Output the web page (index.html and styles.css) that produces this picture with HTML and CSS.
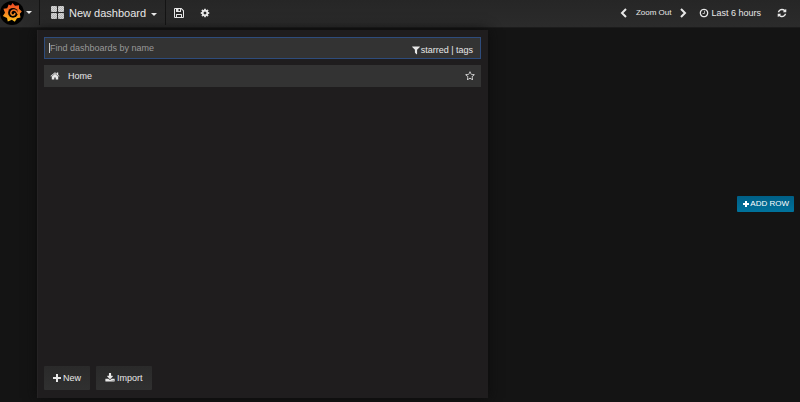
FILE: index.html
```html
<!DOCTYPE html>
<html lang="en">
<head>
    <meta charset="UTF-8">
    <title>New dashboard</title>
    <link rel="stylesheet" href="styles.css">
</head>
<body>
    <header class="navbar">
        <button class="logo-btn" aria-label="Main menu">
            <svg class="logo" viewBox="0 0 24 24">
                <defs>
                    <linearGradient id="flame" gradientUnits="userSpaceOnUse" x1="0" y1="21" x2="0" y2="3">
                        <stop offset="0" stop-color="#fcc820"/>
                        <stop offset="0.5" stop-color="#f58220"/>
                        <stop offset="1" stop-color="#ee4a24"/>
                    </linearGradient>
                </defs>
                <circle cx="12" cy="12" r="12" fill="#000"/>
                <path fill="url(#flame)" d="M12.500 2L15 4.800L19 4.200L19 7.800L21.800 10.500L19.800 12.800L20.500 16.500L17 17.200L14.800 20.800L11.800 18.800L7.800 20.600L7 16.900L2.800 15L5 11.800L3.400 7.800L7.200 7.200L8.600 3.600L11 4.600Z"/>
                <circle cx="13" cy="11.800" r="4.900" fill="#000"/>
                <path fill="none" stroke="url(#flame)" stroke-width="1.500" stroke-linecap="round" d="M17.800 12.500C16.500 9.500 14.500 8.700 12.800 9.200C10.700 9.900 10.300 12.200 11.400 13.500C12.500 14.700 14.700 14.200 14.800 12.600"/>
            </svg>
            <span class="caret"></span>
        </button>
        <button class="title-btn">
            <svg class="grid-icon" viewBox="0 0 13 13">
                <defs>
                    <pattern id="checks" width="2" height="2" patternUnits="userSpaceOnUse">
                        <path fill="#d6d6d6" d="M0 0h2v2h-2z"/>
                        <path fill="#b8b8b8" d="M0 0h1v1h-1zM1 1h1v1h-1z"/>
                    </pattern>
                </defs>
                <g fill="url(#checks)">
                    <rect x="0" y="0" width="6" height="6" rx="1"/>
                    <rect x="7" y="0" width="6" height="6" rx="1"/>
                    <rect x="0" y="7" width="6" height="6" rx="1"/>
                    <rect x="7" y="7" width="6" height="6" rx="1"/>
                </g>
            </svg>
            <span>New dashboard</span>
            <span class="caret"></span>
        </button>
        <button class="nav-btn" aria-label="Save">
            <svg class="icon" viewBox="0 0 10 10"><path fill-rule="evenodd" d="M1 0H7.500L10 2.500V9Q10 10 9 10H1Q0 10 0 9V1Q0 0 1 0ZM1 1V9H2V6.500Q2 6 2.500 6H7.500Q8 6 8 6.500V9H9V3L7 1V3.500Q7 4 6.500 4H2.500Q2 4 2 3.500V1ZM4.500 1V3H6V1ZM3 7V9H7V7Z"/></svg>
        </button>
        <button class="nav-btn" aria-label="Settings">
            <svg class="icon" viewBox="0 0 1792 1792"><path d="M1152 896q0-106-75-181t-181-75-181 75-75 181 75 181 181 75 181-75 75-181zm512-109v222q0 12-8 23t-20 13l-185 28q-19 54-39 91 35 50 107 138 10 12 10 25t-9 23q-27 37-99 108t-94 71q-12 0-26-9l-138-108q-44 23-91 38-16 136-29 186-7 28-36 28h-222q-14 0-24.500-8.500t-11.500-21.500l-28-184q-49-16-90-37l-141 107q-10 9-25 9-14 0-25-11-126-114-165-168-7-10-7-23 0-12 8-23 15-21 51-66.500t54-70.500q-27-50-41-99l-183-27q-13-2-21-12.500t-8-23.500v-222q0-12 8-23t19-13l186-28q14-46 39-92-40-57-107-138-10-12-10-24 0-10 9-23 26-36 98.500-107.500t94.500-71.500q13 0 26 10l138 107q44-23 91-38 16-136 29-186 7-28 36-28h222q14 0 24.500 8.500t11.500 21.500l28 184q49 16 90 37l142-107q9-9 24-9 13 0 25 10 129 119 165 170 7 8 7 22 0 12-8 23-15 21-51 66.500t-54 70.500q26 50 41 98l183 28q13 2 21 12.500t8 23.500z"/></svg>
        </button>
        <div class="time-nav">
            <button aria-label="Back"><svg class="chevron" viewBox="0 0 8 10"><path d="M6 1L2 5L6 9"/></svg></button>
            <button class="zoom-btn">Zoom Out</button>
            <button aria-label="Forward"><svg class="chevron" viewBox="0 0 8 10"><path d="M2 1L6 5L2 9"/></svg></button>
            <button class="range-btn">
                <svg class="icon" viewBox="0 0 1792 1792"><path d="M1024 544v448q0 14-9 23t-23 9h-320q-14 0-23-9t-9-23v-64q0-14 9-23t23-9h224v-352q0-14 9-23t23-9h64q14 0 23 9t9 23zm416 352q0-148-73-273t-198-198-273-73-273 73-198 198-73 273 73 273 198 198 273 73 273-73 198-198 73-273zm224 0q0 209-103 385.500t-279.500 279.500-385.500 103-385.500-103-279.500-279.500-103-385.500 103-385.500 279.500-279.500 385.500-103 385.500 103 279.500 279.500 103 385.500z"/></svg>
                Last 6 hours
            </button>
            <button class="refresh-btn" aria-label="Refresh">
                <svg class="icon" viewBox="0 0 1792 1792"><path d="M1639 1056q0 5-1 7-64 268-268 434.500t-478 166.500q-146 0-282.500-55t-243.500-157l-129 129q-19 19-45 19t-45-19-19-45v-448q0-26 19-45t45-19h448q26 0 45 19t19 45-19 45l-137 137q71 66 161 102t187 36q134 0 250-65t186-179q11-17 53-117 8-23 30-23h192q13 0 22.500 9.500t9.500 22.500zm25-800v448q0 26-19 45t-45 19h-448q-26 0-45-19t-19-45 19-45l138-138q-148-137-349-137-134 0-250 65t-186 179q-11 17-53 117-8 23-30 23h-199q-13 0-22.500-9.500t-9.500-22.500v-7q65-268 270-434.500t480-166.500q146 0 284 55.500t245 156.500l130-129q19-19 45-19t45 19 19 45z"/></svg>
            </button>
        </div>
    </header>

    <main class="dashboard">
        <button class="add-row">
            <svg class="icon-plus" viewBox="0 0 8 8"><path d="M3 1h2v2h2v2h-2v2h-2v-2h-2v-2h2z"/></svg>
            ADD ROW
        </button>
    </main>

    <section class="search-panel">
        <div class="search-box">
            <input type="text" placeholder="Find dashboards by name" aria-label="Find dashboards by name">
            <div class="filters">
                <svg class="icon-filter" viewBox="0 0 1792 1792"><path d="M1595 295q17 41-14 70l-493 493v742q0 42-39 59-13 5-25 5-27 0-45-19l-256-256q-19-19-19-45v-486l-493-493q-31-29-14-70 17-39 59-39h1280q42 0 59 39z"/></svg>
                <span><a href="#">starred</a> | <a href="#">tags</a></span>
            </div>
        </div>
        <div class="result">
            <svg class="icon" viewBox="0 0 1792 1792"><path d="M1472 992v480q0 26-19 45t-45 19h-384v-384h-256v384h-384q-26 0-45-19t-19-45v-480q0-1 .5-3t.5-3l575-474 575 474q1 2 1 6zm223-69l-62 74q-8 9-21 11h-3q-13 0-21-7l-692-577-692 577q-12 8-24 7-13-2-21-11l-62-74q-8-10-7-23.500t11-21.500l719-599q32-26 76-26t76 26l244 204v-195q0-14 9-23t23-9h192q14 0 23 9t9 23v408l219 182q10 8 11 21.500t-7 23.500z"/></svg>
            <a href="#">Home</a>
            <button class="star" aria-label="Star">
                <svg class="icon" viewBox="0 0 1792 1792"><path d="M1201 1004l306-297-422-62-189-382-189 382-422 62 306 297-73 421 378-199 377 199zm527-357q0 22-26 48l-363 354 86 500q1 7 1 20 0 50-41 50-19 0-40-12l-449-236-449 236q-22 12-40 12-21 0-31.500-14.500t-10.500-35.500q0-6 2-20l86-500-364-354q-25-27-25-48 0-37 56-46l502-73 225-455q19-41 49-41t49 41l225 455 502 73q56 9 56 46z"/></svg>
            </button>
        </div>
        <div class="panel-footer">
            <button>
                <svg class="icon-plus" viewBox="0 0 8 8"><path d="M3 0h2v3h3v2h-3v3h-2v-3h-3v-2h3z"/></svg>
                New
            </button>
            <button>
                <svg class="icon" viewBox="0 0 1792 1792"><path d="M1344 1344q0-26-19-45t-45-19-45 19-19 45 19 45 45 19 45-19 19-45zm256 0q0-26-19-45t-45-19-45 19-19 45 19 45 45 19 45-19 19-45zm128-224v320q0 40-28 68t-68 28h-1472q-40 0-68-28t-28-68v-320q0-40 28-68t68-28h465l135 136q58 56 136 56t136-56l136-136h464q40 0 68 28t28 68zm-325-569q17 41-14 70l-448 448q-18 19-45 19t-45-19l-448-448q-31-29-14-70 17-39 59-39h256v-448q0-26 19-45t45-19h256q26 0 45 19t19 45v448h256q42 0 59 39z"/></svg>
                Import
            </button>
        </div>
    </section>
</body>
</html>
```
FILE: styles.css
```css
* {
    box-sizing: border-box;
}
body {
    margin: 0;
    min-height: 100vh;
    display: flex;
    flex-direction: column;
    background: #141414;
    color: #e8e8e8;
    font-family: "Liberation Sans", Arial, sans-serif;
    font-size: 9px;
    line-height: 12px;
}
button {
    display: flex;
    align-items: center;
    padding: 0;
    border: 0;
    background: none;
    color: inherit;
    font: inherit;
    cursor: pointer;
}
a {
    color: inherit;
    text-decoration: none;
}
svg {
    flex: none;
    fill: currentColor;
}
.icon,
.icon-filter {
    width: 10px;
    height: 10px;
}
.icon-plus {
    width: 8px;
    height: 8px;
}
.caret {
    border-left: 3px solid transparent;
    border-right: 3px solid transparent;
    border-top: 3px solid #e8e8e8;
}

/* top bar */
.navbar {
    display: flex;
    height: 28px;
    padding-bottom: 2px;
    background: linear-gradient(#262626, #2b2b2b);
    border-bottom: 1px solid #1c1c1c;
}
.logo-btn {
    width: 40px;
    gap: 2px;
    border-right: 1px solid #141414;
}
.logo {
    width: 24px;
    height: 24px;
}
.title-btn {
    gap: 5px;
    padding: 0 8px 0 11px;
    border-right: 1px solid #141414;
    font-size: 11px;
}
.title-btn .caret {
    margin-top: 3px;
}
.grid-icon {
    width: 13px;
    height: 13px;
}
.nav-btn {
    width: 26px;
    justify-content: center;
}
.time-nav {
    display: flex;
    margin-left: auto;
    padding-right: 13px;
}
.chevron {
    width: 8px;
    height: 10px;
    fill: none;
    stroke: currentColor;
    stroke-width: 2;
}
.zoom-btn {
    margin: 0 8px;
    font-size: 8px;
}
.range-btn {
    gap: 2px;
    margin-left: 12px;
}
.refresh-btn {
    margin-left: 16px;
}

/* dashboard canvas */
.dashboard {
    flex: 1;
    display: flex;
    align-items: center;
    justify-content: flex-end;
    padding: 0 6px 22px 0;
}
.add-row {
    height: 16px;
    padding: 0 5px;
    border-radius: 1px;
    background: linear-gradient(#005f86, #00729c);
    color: #fff;
    font-size: 8px;
}

/* dashboard search dropdown */
.search-panel {
    position: absolute;
    top: 30px;
    bottom: 4px;
    left: 37px;
    width: 451px;
    display: flex;
    flex-direction: column;
    padding: 7px 7px 8px 6px;
    border-left: 1px solid #252324;
    background: #1f1d1e;
    box-shadow: 0 0 12px #0c0c0c;
}
.search-box {
    position: relative;
    display: flex;
    align-items: center;
    height: 22px;
    padding: 0 7px 0 5px;
    border: 1px solid #2e4c7c;
    background: #333;
}
/* text cursor */
.search-box::before {
    content: "";
    position: absolute;
    left: 4px;
    top: 5px;
    width: 1px;
    height: 10px;
    background: #ccc;
}
.search-box input {
    flex: 1;
    min-width: 0;
    padding: 0;
    border: 0;
    outline: 0;
    background: none;
    color: #e8e8e8;
    caret-color: transparent;
    font: inherit;
}
.search-box input::placeholder {
    color: #999;
}
.filters {
    display: flex;
    align-items: center;
    padding-top: 3px;
}
.result {
    display: flex;
    align-items: center;
    gap: 8px;
    height: 22px;
    margin-top: 6px;
    padding: 0 6px;
    background: #333;
}
.star {
    margin-left: auto;
}
.panel-footer {
    display: flex;
    gap: 6px;
    margin-top: auto;
}
.panel-footer button {
    height: 24px;
    gap: 2px;
    padding: 0 9px;
    border-radius: 1px;
    background: linear-gradient(#2a2a2a, #303030);
}
```
